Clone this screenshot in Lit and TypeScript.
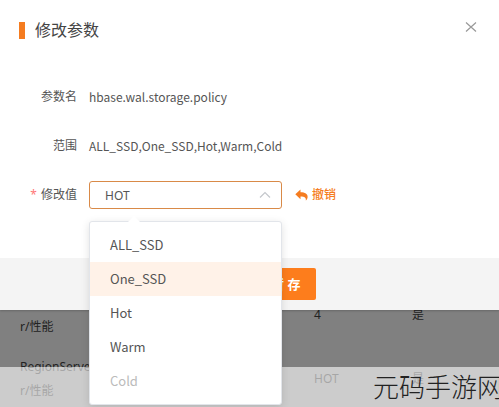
import { LitElement, html, css } from "lit";
import { customElement, state } from "lit/decorators.js";
import { classMap } from "lit/directives/class-map.js";

interface Choice {
  label: string;
  disabled?: boolean;
}

@customElement("app-root")
export class AppRoot extends LitElement {
  static styles = css`
    :host {
      display: block;
      position: relative;
      height: 100vh;
      overflow: hidden;
      background: #808080;
      color: #555;
      font: 12px/24px "Noto Sans", "Noto Sans CJK SC", sans-serif;
    }
    * {
      box-sizing: border-box;
    }
    button,
    select {
      font: inherit;
      color: inherit;
      margin: 0;
      border: 0;
      padding: 0;
      background: none;
      cursor: pointer;
    }

    .page {
      padding-top: 283px;
    }
    .params {
      width: 100%;
      table-layout: fixed;
      border-collapse: collapse;
      color: #222;
    }
    .params td {
      height: 64px;
      padding: 8px 0 8px 20px;
      vertical-align: middle;
      white-space: nowrap;
    }
    .params .name {
      width: 294px;
    }
    .params .value {
      width: 98px;
    }

    .watermark {
      position: absolute;
      inset: auto 0 0 0;
      height: 40px;
      padding-left: 373px;
      overflow: hidden;
      background: rgba(255, 255, 255, 0.6);
      color: #222;
      font-size: 26px;
      font-weight: 300;
      line-height: 38px;
      font-family: "Noto Sans CJK SC", sans-serif;
      white-space: nowrap;
    }

    .dialog {
      position: absolute;
      inset: 0 0 auto 0;
      background: #fff;
      box-shadow: 0 1px 2px rgba(0, 0, 0, 0.2);
    }
    .head {
      display: flex;
      align-items: center;
      height: 60px;
      padding: 0 22px 0 19px;
    }
    .mark {
      width: 6px;
      height: 17px;
      margin-right: 10px;
      background: #f57c20;
    }
    .title {
      flex: 1;
      margin: 0;
      font-size: 16px;
      font-weight: 400;
      color: #444;
    }
    .close {
      display: flex;
      align-self: flex-start;
      padding-top: 21px;
    }

    .form {
      display: grid;
      grid-template-columns: 77px 1fr;
      column-gap: 12px;
      row-gap: 21px;
      align-items: center;
      padding: 23px 0 49px;
      line-height: 28px;
    }
    .label {
      text-align: right;
    }
    .required {
      margin-right: 4px;
      color: #f77;
    }
    .text {
      font-family: "Noto Sans CJK SC", sans-serif;
      font-size: 12px;
    }
    .edit {
      display: flex;
      align-items: center;
      gap: 13px;
    }
    .picker {
      position: relative;
      width: 193px;
    }
    .select {
      display: block;
      appearance: none;
      width: 100%;
      height: 28px;
      padding: 0 32px 0 15px;
      border: 1px solid #d98a48;
      border-radius: 3px;
      background: #fff;
      outline: none;
    }
    .chevron {
      position: absolute;
      right: 11px;
      top: 10px;
      pointer-events: none;
    }
    .menu {
      position: absolute;
      top: 40px;
      left: 0;
      width: 100%;
      margin: 0;
      padding: 6px 0;
      border: 1px solid #e2e5ea;
      border-radius: 3px;
      background: #fff;
      box-shadow: 0 2px 8px rgba(0, 0, 0, 0.12);
      z-index: 2;
    }
    .arrow {
      position: absolute;
      top: -6px;
      left: 38px;
    }
    .item {
      display: block;
      width: 100%;
      height: 34px;
      padding-left: 20px;
      font-family: "Noto Sans CJK SC", sans-serif;
      font-size: 13px;
      text-align: left;
    }
    .item.active {
      background: #fff2e8;
    }
    .item:disabled {
      color: #bbb;
      cursor: default;
    }
    .undo {
      display: flex;
      align-items: center;
      gap: 4px;
      color: #f57c20;
      font-weight: 500;
    }

    .foot {
      padding: 10px 0 10px 255px;
      background: #f4f4f4;
    }
    .save {
      display: block;
      height: 32px;
      padding: 0 16px;
      border-radius: 2px;
      background: #fd7d1c;
      color: #fff;
      font-size: 13px;
      font-weight: 700;
    }
  `;

  @state() private active = "One_SSD";

  private choices: Choice[] = [
    { label: "ALL_SSD" },
    { label: "One_SSD" },
    { label: "Hot" },
    { label: "Warm" },
    { label: "Cold", disabled: true },
  ];

  private rows = [
    { value: "4", restart: "是" },
    { value: "HOT", restart: "是" },
  ];

  render() {
    return html`
      <main class="page">
        <table class="params">
          <tbody>
            ${this.rows.map(
              (row) => html`<tr>
                <td class="name">RegionServe<br />r/性能</td>
                <td class="value">${row.value}</td>
                <td>${row.restart}</td>
              </tr>`
            )}
          </tbody>
        </table>
      </main>
      <div class="watermark">元码手游网</div>

      <section class="dialog" role="dialog" aria-labelledby="title">
        <header class="head">
          <span class="mark"></span>
          <h1 class="title" id="title">修改参数</h1>
          <button class="close" aria-label="关闭">
            <svg width="12" height="12" viewBox="0 0 12 12" fill="none" stroke="#999" stroke-width="1.2">
              <path d="M1 1.500L11 10.500M11 1.500L1 10.500" />
            </svg>
          </button>
        </header>
        <div class="form">
          <span class="label">参数名</span>
          <span class="text">hbase.wal.storage.policy</span>
          <span class="label">范围</span>
          <span class="text">ALL_SSD,One_SSD,Hot,Warm,Cold</span>
          <label class="label" for="value"><span class="required">*</span>修改值</label>
          <div class="edit">
            <div class="picker">
              <select class="select" id="value">
                <option>HOT</option>
              </select>
              <svg class="chevron" width="12" height="8" viewBox="0 0 12 8" fill="none" stroke="#c4c7cc" stroke-width="1.2">
                <path d="M1 6.500L6 1.500L11 6.500" />
              </svg>
              <div class="menu" role="listbox" aria-label="修改值">
                <svg class="arrow" width="12" height="7" viewBox="0 0 12 7">
                  <path d="M0 6L6 0L12 6V7H0Z" fill="#fff" />
                </svg>
                ${this.choices.map(
                  (c) => html`<button
                    role="option"
                    aria-selected=${c.label === this.active}
                    class=${classMap({ item: true, active: c.label === this.active })}
                    ?disabled=${c.disabled}
                    @click=${() => (this.active = c.label)}
                  >${c.label}</button>`
                )}
              </div>
            </div>
            <button class="undo">
              <svg width="13" height="12" viewBox="0 0 13 12" fill="#f57c20">
                <path d="M5.500 0.500V3.200C10 3.200 13 5 12.600 8.200C12.500 9.600 11.800 10.700 10.800 11.500C11.200 8.800 9.800 7.500 5.500 7.500V10.200L0.300 5.300Z" />
              </svg>
              撤销
            </button>
          </div>
        </div>
        <footer class="foot">
          <button class="save">暂 存</button>
        </footer>
      </section>
    `;
  }
}
